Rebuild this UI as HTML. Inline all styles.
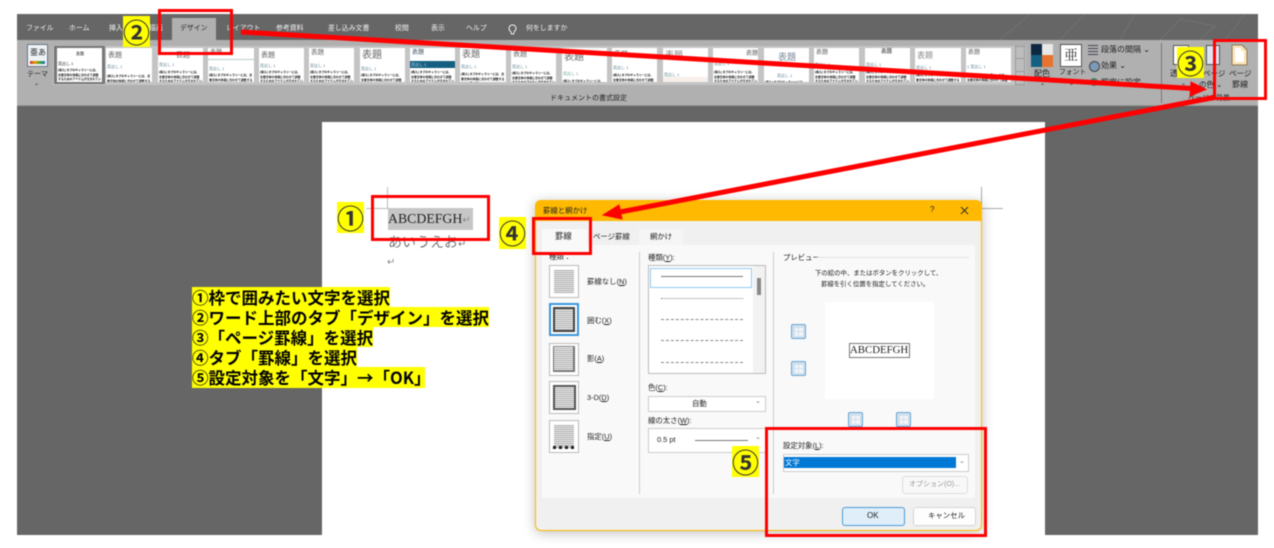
<!DOCTYPE html>
<html lang="ja"><head><meta charset="utf-8"><title>罫線と網かけ</title>
<style>
html,body{margin:0;padding:0;background:#fff}
#r{position:relative;width:1274px;height:548px;overflow:hidden;background:#fff;font-family:"Liberation Sans","Noto Sans CJK JP",sans-serif;color:#222}
#s{position:absolute;left:0;top:0;width:1274px;height:548px;filter:blur(.4px)}
.a{position:absolute;box-sizing:border-box}
.t{position:absolute;white-space:nowrap;line-height:1;font-size:7.4px;color:#222}
.w{color:#f2f2f2;font-size:6.9px;top:26px}
.th{position:absolute;top:48px;height:34px;background:#fff;overflow:hidden}
.th i{position:absolute;left:2px;top:4px;font-style:normal;font-size:7px;line-height:1;color:#666;white-space:nowrap}
.th b{position:absolute;left:1px;top:17px;font-weight:400;font-size:4px;line-height:1;color:#5b7f90;white-space:nowrap}
.th p{position:absolute;left:1px;right:1px;top:26px;margin:0;font-size:2.9px;line-height:4.7px;color:#111;font-weight:700;word-break:break-all}
.ib{position:absolute;left:549px;width:30px;height:33px;background:#fff;border:1px solid #bbb;box-sizing:border-box}
.ib:after{content:"";position:absolute;left:4px;right:4px;top:4px;bottom:4px;background:repeating-linear-gradient(#aaa 0 1px,#eee 1px 2px)}
.ls{position:absolute;left:661px;width:82px;height:0;border-top:1px dashed #888}
.pb{position:absolute;width:15px;height:15px;background:#cfe0ef;border:1px solid #6aa3d2;border-radius:2px;box-sizing:border-box}
.pb:after{content:"";position:absolute;left:2.5px;top:2.5px;width:8px;height:8px;background:linear-gradient(#cfe0ef,#cfe0ef) center/1px 100% no-repeat,linear-gradient(#cfe0ef,#cfe0ef) center/100% 1px no-repeat,#f5f5f5}
.sel{position:absolute;background:#fff;border:1px solid #ccc;box-sizing:border-box}
.y{position:absolute;background:#ff0;width:27px;height:31px;font-size:27px;font-weight:700;line-height:31px;text-align:center;color:#333;overflow:hidden;font-family:"Noto Sans CJK JP",sans-serif}
.rb{position:absolute;border:3px solid #f00;box-sizing:border-box}
.li{position:absolute;left:192px;height:20px;background:#ff0;font-weight:700;font-size:16.5px;line-height:20px;color:#000;white-space:nowrap;font-family:"Noto Sans CJK JP",sans-serif}
</style></head><body><div id="r"><div id="s">
<!-- Word window -->
<div class="a" style="left:17px;top:14px;width:1241px;height:521px;background:#666"></div>
<svg class="a" style="left:1000px;top:14px" width="258" height="26" fill="none" stroke="#727272"><path d="M0 26L30 0M60 26L85 0M120 26L135 0M160 26L180 5L215 12L200 26M225 26L245 0"/></svg>
<div class="a" style="left:17px;top:40px;width:1241px;height:66px;background:#b0b0b0;border-bottom:1px solid #999"></div>
<div class="a" style="left:172px;top:18px;width:44px;height:22px;background:#b0b0b0"></div>
<span class="t w" style="left:26px">ファイル</span>
<span class="t w" style="left:69px">ホーム</span>
<span class="t w" style="left:109px">挿入</span>
<span class="t w" style="left:149px">描画</span>
<span class="t" style="left:180px;top:26px;font-size:6.9px">デザイン</span>
<span class="t w" style="left:226px">レイアウト</span>
<span class="t w" style="left:276px">参考資料</span>
<span class="t w" style="left:328px">差し込み文書</span>
<span class="t w" style="left:395px">校閲</span>
<span class="t w" style="left:431px">表示</span>
<span class="t w" style="left:466px">ヘルプ</span>
<svg class="a" style="left:508px;top:24px" width="9" height="12" fill="none" stroke="#eee"><path d="M4.5 1a3.4 3.4 0 0 0-2 6.2L3.5 10h2l1-2.8A3.4 3.4 0 0 0 4.5 1z"/></svg>
<span class="t w" style="left:526px">何をしますか</span>
<!-- theme -->
<div class="a" style="left:27px;top:44px;width:21px;height:23px;background:#eef3f6;border:1px solid #678"></div>
<span class="t" style="left:30px;top:49px;font-size:8px">亜あ</span>
<div class="a" style="left:30px;top:61px;width:15px;height:3px;background:linear-gradient(90deg,#c33,#e90,#3a3,#36c)"></div>
<span class="t" style="left:27px;top:71px;font-size:7px">テーマ</span>
<span class="t" style="left:34px;top:81px;font-size:6px">⌄</span>
<!-- gallery -->
<div class="a" style="left:53px;top:46px;width:973px;height:39px;background:#c4c4c4"></div>
<div class="a" style="left:54px;top:46px;width:51px;height:38px;background:#777"></div>
<div class="th" style="left:57px;width:45px"><i style="left:19px;font-size:4px;top:4px;color:#222">表題</i><b style="top:14px;color:#222">見出し 1</b><p style="top:20px">[挿入] タブのギャラリーには、文書全体の体裁に合わせて調整するためのアイテムが含まれています。ヘッダー、フッター、一覧、表紙</p></div>
<div class="th" style="left:106px;width:46px"><i>表題</i><b>見出し 1</b><p>[挿入] タブのギャラリーには、文書全体の体裁に合わせて調整するためのアイテム</p></div>
<div class="th" style="left:158px;width:45px"><i style="left:18px">表題</i><b style="top:15px">見出し 1</b><p style="top:22px">[挿入] タブのギャラリーには、文書全体の体裁に合わせて調整するためのアイテムが含まれています。</p></div>
<div class="th" style="left:208px;width:46px"><i style="top:2px;font-size:6px">表題</i><b style="top:19px">見出し 1</b><p style="top:25px">[挿入] タブのギャラリーには、文書全体の体裁に合わせて調整するためのアイテム</p><u style="position:absolute;left:0;right:0;top:11px;height:1px;background:#bcc"></u></div>
<div class="th" style="left:259px;width:45px"><i>表題</i><b style="top:16px">見出し 1</b><p style="top:22px">[挿入] タブのギャラリーには、文書全体の体裁に合わせて調整するためのアイテムが含まれています。</p></div>
<div class="th" style="left:309px;width:45px"><i style="font-size:6.5px;top:2px">表題</i><b style="top:16px">見出し 1</b><p style="top:22px">[挿入] タブのギャラリーには、文書全体の体裁に合わせて調整するためのアイテムが含まれています。</p></div>
<div class="th" style="left:360px;width:45px"><i style="font-size:10px;top:3px">表題</i><b style="top:19px">見出し 1</b><p style="top:25px">[挿入] タブのギャラリーには、文書全体の体裁に合わせて調整するためのアイテム</p></div>
<div class="th" style="left:410px;width:45px"><i style="font-size:6px;top:2px;color:#456">表題</i><u style="position:absolute;left:0;right:0;top:13px;height:7px;background:#156082"></u><b style="top:15px;color:#cde">見出し 1</b><p style="top:22px">[挿入] タブのギャラリーには、文書全体の体裁に合わせて調整するためのアイテムが含まれています。</p></div>
<div class="th" style="left:460px;width:46px"><i style="font-size:9px;top:2px">表題</i><b>見出し 1</b><p style="top:24px">[挿入] タブのギャラリーには、文書全体の体裁に合わせて調整するためのアイテム</p></div>
<div class="th" style="left:511px;width:45px"><i style="top:3px">表題</i><b style="top:17px">見出し 1</b><p style="top:23px">[挿入] タブのギャラリーには、文書全体の体裁に合わせて調整するためのアイテムが含まれています。</p></div>
<div class="th" style="left:562px;width:45px"><i style="font-size:10px;top:5px">表題</i><b style="top:24px;color:#6a8">見出し 1</b><p style="top:31px">[挿入] タブのギャラリーには、文書全体の体裁</p></div>
<div class="th" style="left:612px;width:45px"><i style="top:3px">表題</i><b style="top:18px">見出し 1</b><p style="top:25px">[挿入] タブのギャラリーには、文書全体の体裁に合わせて調整するためのアイテム</p></div>
<div class="th" style="left:663px;width:45px;background:linear-gradient(#fff 85%,#f7efe9 85%)"><i style="font-size:9px;top:3px;color:#888">表題</i><b style="top:25px">見出し 1</b></div>
<div class="th" style="left:713px;width:45px"><i style="left:33px;top:3px;font-size:6px">表題</i><b style="top:14px">見出し 1</b><p style="top:22px">[挿入] タブのギャラリーには、文書全体の体裁に合わせて調整するためのアイテムが含まれています。</p></div>
<div class="th" style="left:764px;width:45px"><i style="left:14px;font-size:9px;top:5px;color:#789">表題</i><b style="left:13px;top:26px">見出し 1</b><p style="top:32px">[挿入] タブのギャラリーには、文書全体の体裁</p></div>
<div class="th" style="left:814px;width:45px"><i style="font-size:6px;top:2px">表題</i><b style="top:15px">見出し 1</b><p style="top:22px">[挿入] タブのギャラリーには、文書全体の体裁に合わせて調整するためのアイテムが含まれています。</p></div>
<div class="th" style="left:865px;width:45px"><i style="left:16px;font-size:5.5px;top:2px;font-weight:700">表題</i><b style="top:15px">見出し 1</b><p style="top:22px">[挿入] タブのギャラリーには、文書全体の体裁に合わせて調整するためのアイテムが含まれています。</p></div>
<div class="th" style="left:915px;width:46px"><i style="font-size:8px;top:4px;color:#888">表題</i><b style="top:18px">見出し 1</b><p style="top:25px">[挿入] タブのギャラリーには、文書全体の体裁に合わせて調整するためのアイテム</p></div>
<div class="th" style="left:966px;width:45px"><i style="font-size:6px;top:2px">表題</i><b style="top:17px">1 見出し 1</b><p style="top:25px">[挿入] タブのギャラリーには、文書全体の体裁に合わせて調整するためのアイテム</p></div>
<div class="a" style="left:1015px;top:46px;width:10px;height:39px;background:#bdbdbd;border:1px solid #999"></div>
<div class="a" style="left:1015px;top:58px;width:10px;height:14px;border:1px solid #999"></div>
<span class="t" style="left:550px;top:95px;font-size:7px">ドキュメントの書式設定</span>
<!-- colours -->
<div class="a" style="left:1031px;top:44px;width:11px;height:11px;background:#0e2841"></div>
<div class="a" style="left:1042px;top:44px;width:11px;height:11px;background:#e8e8e8"></div>
<div class="a" style="left:1031px;top:55px;width:11px;height:12px;background:#156082"></div>
<div class="a" style="left:1042px;top:55px;width:11px;height:12px;background:#e9732e"></div>
<span class="t" style="left:1034px;top:70px;font-size:8px">配色</span>
<div class="a" style="left:1060px;top:44px;width:22px;height:23px;background:#fff;border:1px solid #555;text-align:center;font-size:14px;line-height:21px;color:#333;font-family:'Noto Serif CJK SC',serif">亜</div>
<span class="t" style="left:1059px;top:70px;font-size:6.8px">フォント</span>
<span class="t" style="left:1040px;top:81px;font-size:6px">⌄</span><span class="t" style="left:1069px;top:81px;font-size:6px">⌄</span>
<div class="a" style="left:1088px;top:45px;width:10px;height:10px;background:repeating-linear-gradient(#445 0 1px,transparent 1px 3px)"></div>
<span class="t" style="left:1101px;top:46px;font-size:8px">段落の間隔 ⌄</span>
<div class="a" style="left:1089px;top:61px;width:11px;height:11px;background:#7a9ab8;border:1px solid #444;border-radius:50%"></div>
<span class="t" style="left:1101px;top:62px;font-size:8px">効果 ⌄</span>
<div class="a" style="left:1090px;top:78px;width:8px;height:8px;background:#3a8a70;border-radius:50%"></div>
<span class="t" style="left:1101px;top:79px;font-size:8px">既定に設定</span>
<div class="a" style="left:1161px;top:43px;width:1px;height:60px;background:#777"></div>
<div class="a" style="left:1173px;top:45px;width:16px;height:20px;background:#fff;border:1px solid #555"></div>
<span class="t" style="left:1170px;top:70px;font-size:8px">透かし</span>
<span class="t" style="left:1181px;top:81px;font-size:6px">⌄</span>
<div class="a" style="left:1206px;top:45px;width:14px;height:20px;background:#dbe6f5;border:1px solid #555"></div>
<span class="t" style="left:1203px;top:70px;font-size:7.5px">ページ</span>
<span class="t" style="left:1199px;top:81px;font-size:7.5px">の色 ⌄</span>
<svg class="a" style="left:1231px;top:44px" width="17" height="22"><path d="M1 1H11L16 6V21H1Z" fill="#fbe3b6" stroke="#8a7a5a"/><path d="M4 4H10V7H13V18H4Z" fill="#fff"/></svg>
<span class="t" style="left:1229px;top:70px;font-size:7.5px">ページ</span>
<span class="t" style="left:1232px;top:81px;font-size:8px">罫線</span>
<span class="t" style="left:1188px;top:95px;font-size:7px">ページの背景</span>
<!-- page -->
<div class="a" style="left:322px;top:122px;width:723px;height:413px;background:#fff"></div>
<div class="a" style="left:366px;top:208px;width:22px;height:1px;background:#bbb"></div>
<div class="a" style="left:387px;top:187px;width:1px;height:21px;background:#bbb"></div>
<div class="a" style="left:981px;top:208px;width:22px;height:1px;background:#aaa"></div>
<div class="a" style="left:981px;top:187px;width:1px;height:21px;background:#aaa"></div>
<div class="a" style="left:388px;top:208px;width:85px;height:22px;background:#c6c6c6"></div>
<span class="t" style="left:388px;top:212px;font-size:13.8px;font-family:'Liberation Serif',serif">ABCDEFGH<span style="color:#888;font-size:10px">↵</span></span>
<span class="t" style="left:388px;top:235px;font-size:14px;color:#777">あいうえお<span style="font-size:10px">↵</span></span>
<span class="t" style="left:387px;top:258px;font-size:10px;color:#888">↵</span>
<!-- dialog -->
<div class="a" style="left:535px;top:200px;width:447px;height:331px;background:#f0f0f0;border:1px solid #ffb900;border-radius:6px;box-shadow:0 2px 12px rgba(0,0,0,.25)"></div>
<div class="a" style="left:535px;top:200px;width:447px;height:21px;background:#ffb900;border-radius:6px 6px 0 0"></div>
<span class="t" style="left:543px;top:207px">罫線と網かけ</span>
<span class="t" style="left:930px;top:206px;font-size:8px">?</span>
<svg class="a" style="left:960px;top:206px" width="9" height="9" stroke="#333"><path d="M1 1L8 8M8 1L1 8"/></svg>
<div class="a" style="left:542px;top:245px;width:433px;height:253px;background:#f9f9f9"></div>
<div class="a" style="left:542px;top:229px;width:45px;height:17px;background:#f9f9f9"></div>
<div class="a" style="left:639px;top:229px;width:44px;height:16px;background:#f5f5f5"></div>
<span class="t" style="left:555px;top:232px;font-size:8.4px">罫線</span>
<span class="t" style="left:593px;top:233px">ページ罫線</span>
<span class="t" style="left:650px;top:233px">網かけ</span>
<span class="t" style="left:549px;top:253px">種類：</span>
<div class="ib" style="top:265px"></div>
<div class="ib" style="top:303px;border:2px solid #3a96dd"></div><div class="a" style="left:553px;top:307px;width:22px;height:25px;border:2px solid #444"></div>
<div class="ib" style="top:343px"></div><div class="a" style="left:553px;top:346px;width:22px;height:26px;border:1px solid #777;border-right-width:2px;border-bottom-width:2px"></div>
<div class="ib" style="top:381px"></div><div class="a" style="left:553px;top:385px;width:23px;height:25px;border:2px solid #555"></div>
<div class="ib" style="top:420px"></div><div class="a" style="left:553px;top:446px;width:22px;height:3px;background:repeating-linear-gradient(90deg,#222 0 3px,transparent 3px 6px)"></div>
<span class="t" style="left:587px;top:278px">罫線なし(<u>N</u>)</span>
<span class="t" style="left:587px;top:317px">囲む(<u>X</u>)</span>
<span class="t" style="left:587px;top:355px">影(<u>A</u>)</span>
<span class="t" style="left:587px;top:394px">3-D(<u>D</u>)</span>
<span class="t" style="left:587px;top:433px">指定(<u>U</u>)</span>
<div class="a" style="left:639px;top:252px;width:1px;height:242px;background:#ccc"></div>
<span class="t" style="left:648px;top:254px">種類(<u>Y</u>):</span>
<div class="a" style="left:648px;top:265px;width:118px;height:109px;background:#fff;border:1px solid #bbb"></div>
<div class="a" style="left:650px;top:268px;width:102px;height:20px;border:1px solid #90c8f0"></div>
<div class="a" style="left:661px;top:276px;width:82px;height:1px;background:#777"></div>
<div class="ls" style="top:298px;border-top-style:dotted"></div><div class="ls" style="top:319px"></div><div class="ls" style="top:340px"></div><div class="ls" style="top:362px"></div>
<div class="a" style="left:753px;top:266px;width:12px;height:107px;background:#f2f2f2"></div>
<div class="a" style="left:757px;top:278px;width:4px;height:17px;background:#888"></div>
<span class="t" style="left:648px;top:384px">色(<u>C</u>):</span>
<div class="sel" style="left:648px;top:396px;width:118px;height:16px"></div>
<span class="t" style="left:692px;top:400px">自動</span><span class="t" style="left:755px;top:398px;font-size:7px;color:#777">⌄</span>
<span class="t" style="left:648px;top:417px">線の太さ(<u>W</u>):</span>
<div class="sel" style="left:648px;top:428px;width:118px;height:25px"></div>
<span class="t" style="left:657px;top:436px">0.5 pt</span>
<div class="a" style="left:695px;top:440px;width:53px;height:1px;background:#777"></div>
<span class="t" style="left:755px;top:434px;font-size:7px;color:#777">⌄</span>
<div class="a" style="left:773px;top:252px;width:1px;height:242px;background:#ccc"></div>
<span class="t" style="left:783px;top:254px">プレビュー</span>
<div class="a" style="left:817px;top:257px;width:152px;height:1px;background:#e2e2e2"></div>
<span class="t" style="left:815px;top:271px;font-size:6.4px">下の絵の中、またはボタンをクリックして、</span>
<span class="t" style="left:821px;top:282px;font-size:6.4px">罫線を引く位置を指定してください。</span>
<div class="a" style="left:825px;top:302px;width:109px;height:97px;background:#fff"></div>
<div class="a" style="left:849px;top:343px;width:61px;height:15px;border:1px solid #777"></div>
<span class="t" style="left:850px;top:345px;font-size:10.8px;font-family:'Liberation Serif',serif">ABCDEFGH</span>
<div class="pb" style="left:791px;top:324px"></div><div class="pb" style="left:791px;top:361px"></div>
<div class="pb" style="left:848px;top:412px"></div><div class="pb" style="left:896px;top:412px"></div>
<span class="t" style="left:783px;top:442px">設定対象(<u>L</u>):</span>
<div class="sel" style="left:783px;top:454px;width:186px;height:18px"></div>
<div class="a" style="left:784px;top:457px;width:172px;height:11px;background:#0078d4"></div>
<span class="t" style="left:785px;top:459px;color:#fff">文字</span><span class="t" style="left:959px;top:458px;font-size:7px;color:#777">⌄</span>
<div class="a" style="left:902px;top:476px;width:66px;height:18px;background:#f8f8f8;border:1px solid #ddd;border-radius:3px"></div>
<span class="t" style="left:909px;top:481px;color:#999;font-size:7px">オプション(O)...</span>
<div class="a" style="left:842px;top:507px;width:63px;height:19px;background:#e0eef9;border:1px solid #4a9ad8;border-radius:3px"></div>
<span class="t" style="left:867px;top:512px;font-size:8px">OK</span>
<div class="a" style="left:913px;top:507px;width:63px;height:19px;background:#fdfdfd;border:1px solid #d5d5d5;border-radius:3px"></div>
<span class="t" style="left:928px;top:512px">キャンセル</span>
<!-- instructions -->
<div class="li" style="top:287px">①枠で囲みたい文字を選択</div>
<div class="li" style="top:307px">②ワード上部のタブ「デザイン」を選択</div>
<div class="li" style="top:327px">③「ページ罫線」を選択</div>
<div class="li" style="top:347px">④タブ「罫線」を選択</div>
<div class="li" style="top:367px;height:21px;width:233px">⑤設定対象を「文字」→「OK」</div>
<!-- callouts -->
<div class="y" style="left:123px;top:16px">②</div>
<div class="y" style="left:1177px;top:47px">③</div>
<div class="y" style="left:337px;top:202px">①</div>
<div class="y" style="left:499px;top:217px;height:32px">④</div>
<div class="y" style="left:732px;top:446px">⑤</div>
<div class="rb" style="left:158px;top:9px;width:75px;height:46px"></div>
<div class="rb" style="left:1213px;top:39px;width:54px;height:61px"></div>
<div class="rb" style="left:371px;top:195px;width:119px;height:46px"></div>
<div class="rb" style="left:532px;top:217px;width:60px;height:38px"></div>
<div class="rb" style="left:765px;top:427px;width:222px;height:110px"></div>
<svg class="a" style="left:0;top:0" width="1274" height="548">
<path d="M241 32L1193 88.5" stroke="#f00" stroke-width="5"/><path d="M1206 89.5L1191 82L1190 96Z" fill="#f00" stroke="#f00"/>
<path d="M1214 97.5L620 212" stroke="#f00" stroke-width="5"/><path d="M603 215L619 205L622 219Z" fill="#f00" stroke="#f00"/>
</svg>
</div></div></body></html>
